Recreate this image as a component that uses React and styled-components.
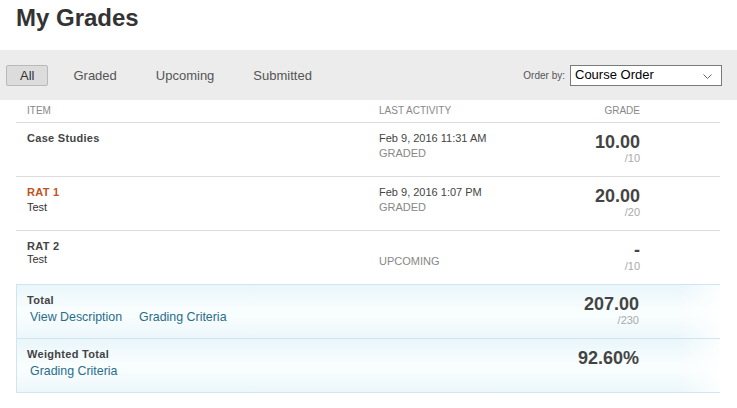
import React from 'react';
import styled, { createGlobalStyle } from 'styled-components';

const grades = [
  {
    id: 1,
    name: 'Case Studies',
    date: 'Feb 9, 2016 11:31 AM',
    status: 'GRADED',
    score: '10.00',
    points: '/10',
  },
  {
    id: 2,
    name: 'RAT 1',
    sub: 'Test',
    link: true,
    date: 'Feb 9, 2016 1:07 PM',
    status: 'GRADED',
    score: '20.00',
    points: '/20',
  },
  {
    id: 3,
    name: 'RAT 2',
    sub: 'Test',
    date: '',
    status: 'UPCOMING',
    score: '-',
    points: '/10',
  },
];

const tabs = ['All', 'Graded', 'Upcoming', 'Submitted'];

const App = () => {
  return (
    <Page>
      <GlobalStyle />
      <Title>My Grades</Title>

      <FilterBar>
        <Tabs>
          {tabs.map((tab, i) => (
            <Tab key={tab} active={i === 0}>
              {tab}
            </Tab>
          ))}
        </Tabs>
        <OrderBy>
          <OrderLabel>Order by:</OrderLabel>
          <Select>
            Course Order
            <Chevron viewBox="0 0 9 5" width="9" height="5">
              <polyline points="0.5,0.5 4.5,4.5 8.5,0.5" fill="none" stroke="#666" strokeWidth="1" />
            </Chevron>
          </Select>
        </OrderBy>
      </FilterBar>

      <Table>
        <HeaderRow>
          <HeadCell>Item</HeadCell>
          <HeadCell>Last Activity</HeadCell>
          <HeadCell right>Grade</HeadCell>
        </HeaderRow>

        {grades.map((g, i) => (
          <Row key={g.id} last={i === grades.length - 1}>
            <div>
              <ItemName link={g.link}>{g.name}</ItemName>
              {g.sub && <ItemSub>{g.sub}</ItemSub>}
            </div>
            <div>
              <DateText>{g.date || '\u00a0'}</DateText>
              <Status>{g.status}</Status>
            </div>
            <GradeCell>
              <Score>{g.score}</Score>
              <Points>{g.points}</Points>
            </GradeCell>
          </Row>
        ))}

        <TotalGroup>
          <TotalRow>
            <div>
              <ItemName>Total</ItemName>
              <Links>
                <Link>View Description</Link>
                <Link>Grading Criteria</Link>
              </Links>
            </div>
            <div />
            <GradeCell>
              <Score>207.00</Score>
              <Points>/230</Points>
            </GradeCell>
          </TotalRow>
          <TotalRow>
            <div>
              <ItemName>Weighted Total</ItemName>
              <Links>
                <Link>Grading Criteria</Link>
              </Links>
            </div>
            <div />
            <GradeCell>
              <Score>92.60%</Score>
            </GradeCell>
          </TotalRow>
        </TotalGroup>
      </Table>
    </Page>
  );
};

// Styled components
const GlobalStyle = createGlobalStyle`
  body {
    margin: 0;
    background: #fff;
    font-family: "Liberation Sans", Arial, sans-serif;
    color: #333;
  }
`;

const Page = styled.div`
  width: 737px;
  height: 408px;
  overflow: hidden;
`;

const Title = styled.h1`
  margin: 0;
  height: 50px;
  padding: 4px 0 0 16px;
  box-sizing: border-box;
  font-size: 24px;
  line-height: 28px;
  font-weight: bold;
  color: #333;
`;

const FilterBar = styled.div`
  height: 50px;
  background: #ececec;
  display: flex;
  align-items: center;
  justify-content: space-between;
  padding: 0 15px 0 6px;
  box-sizing: border-box;
`;

const Tabs = styled.div`
  display: flex;
  align-items: center;
  gap: 11px;
  margin-top: 1px;
`;

const Tab = styled.div`
  height: 21px;
  line-height: 19px;
  padding: 0 13px;
  box-sizing: border-box;
  font-size: 13px;
  color: ${(props) => (props.active ? '#333' : '#555')};
  background: ${(props) => (props.active ? '#dcdcdc' : 'transparent')};
  border: 1px solid ${(props) => (props.active ? '#b9b9b9' : 'transparent')};
  border-radius: 2px;
`;

const OrderBy = styled.div`
  display: flex;
  align-items: center;
  gap: 5px;
`;

const OrderLabel = styled.span`
  font-size: 10px;
  color: #555;
`;

const Select = styled.div`
  position: relative;
  width: 152px;
  height: 21px;
  box-sizing: border-box;
  border: 1px solid #7a7a7a;
  background: #fff;
  padding-left: 4px;
  font-size: 13px;
  line-height: 18px;
  color: #000;
`;

const Chevron = styled.svg`
  position: absolute;
  right: 9px;
  top: 8px;
`;

const Table = styled.div`
  width: 704px;
  margin-left: 16px;
`;

const columns = `
  display: grid;
  grid-template-columns: 352px 170px 91px;
  align-items: start;
  box-sizing: border-box;
`;

const HeaderRow = styled.div`
  ${columns}
  height: 23px;
  padding: 4px 0 0 11px;
  border-bottom: 1px solid #dcdcdc;
`;

const HeadCell = styled.div`
  font-size: 10px;
  line-height: 14px;
  text-transform: uppercase;
  color: #888;
  text-align: ${(props) => (props.right ? 'right' : 'left')};
`;

const Row = styled.div`
  ${columns}
  height: ${(props) => (props.last ? '53px' : '54px')};
  padding: 8px 0 0 11px;
  border-bottom: ${(props) => (props.last ? 'none' : '1px solid #dcdcdc')};
`;

const ItemName = styled.div`
  font-size: 11px;
  line-height: 14px;
  font-weight: bold;
  letter-spacing: 0.3px;
  color: ${(props) => (props.link ? '#c0531c' : '#444')};
  margin-bottom: ${(props) => (props.link ? '2px' : '0')};
`;

const ItemSub = styled.div`
  font-size: 11px;
  line-height: 13px;
  color: #333;
`;

const DateText = styled.div`
  font-size: 11px;
  line-height: 15px;
  color: #444;
`;

const Status = styled.div`
  font-size: 11px;
  line-height: 15px;
  color: #888;
`;

const GradeCell = styled.div`
  text-align: right;
  margin-top: 1px;
`;

const Score = styled.div`
  font-size: 18px;
  line-height: 20px;
  font-weight: bold;
  color: #444;
`;

const Points = styled.div`
  font-size: 11px;
  line-height: 12px;
  color: #aaa;
`;

const TotalGroup = styled.div`
  border-top: 1px solid #d2e5ec;
  border-left: 1px solid #d2e5ec;
`;

const TotalRow = styled.div`
  ${columns}
  grid-template-columns: 351px 170px 91px;
  height: 54px;
  padding: 8px 0 0 10px;
  border-bottom: 1px solid #d2e5ec;
  background:
    linear-gradient(to right, rgba(255, 255, 255, 0) 94%, rgba(255, 255, 255, 0.85) 100%),
    linear-gradient(to bottom, #e9f6fb 0%, #f8fdfe 45%, #f8fdfe 60%, #ecf7fb 100%);
`;

const Links = styled.div`
  display: flex;
  gap: 17px;
  padding-left: 3px;
  margin-top: 2px;
`;

const Link = styled.a`
  font-size: 12.4px;
  line-height: 16px;
  color: #2a6d8b;
  cursor: pointer;
`;

export default App;
